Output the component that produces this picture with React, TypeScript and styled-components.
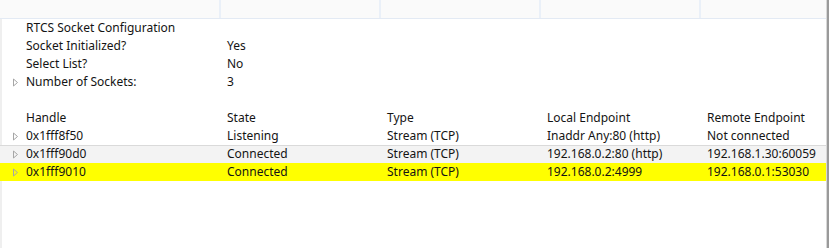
import styled, { createGlobalStyle } from "styled-components";

const GlobalStyle = createGlobalStyle`
  html, body { margin: 0; padding: 0; background: #fff; }
  body {
    font-family: "Noto Sans", "Noto Sans CJK SC", "Liberation Sans", sans-serif;
    font-size: 12px;
    color: #141414;
  }
`;

interface IRow {
  cells: string[];
  expandable?: boolean;
  tone?: "plain" | "alt" | "selected";
}

const rows: IRow[] = [
  { cells: ["RTCS Socket Configuration", "", "", "", ""] },
  { cells: ["Socket Initialized?", "Yes", "", "", ""] },
  { cells: ["Select List?", "No", "", "", ""] },
  { cells: ["Number of Sockets:", "3", "", "", ""], expandable: true },
  { cells: ["", "", "", "", ""] },
  { cells: ["Handle", "State", "Type", "Local Endpoint", "Remote Endpoint"] },
  {
    cells: ["0x1fff8f50", "Listening", "Stream (TCP)", "Inaddr Any:80 (http)", "Not connected"],
    expandable: true,
  },
  {
    cells: ["0x1fff90d0", "Connected", "Stream (TCP)", "192.168.0.2:80 (http)", "192.168.1.30:60059"],
    expandable: true,
    tone: "alt",
  },
  {
    cells: ["0x1fff9010", "Connected", "Stream (TCP)", "192.168.0.2:4999", "192.168.0.1:53030"],
    expandable: true,
    tone: "selected",
  },
];

const COLS = "221px 160px 160px 160px 1fr";

const App = () => {
  return (
    <>
      <GlobalStyle />
      <Frame>
        <Tree>
          <Header>
            {[0, 1, 2, 3, 4].map((i) => (
              <HeaderCell key={i} />
            ))}
          </Header>
          {rows.map((row, i) => (
            <Row key={i} $tone={row.tone ?? "plain"}>
              <FirstCell>
                <Twisty>
                  {row.expandable && (
                    <svg width="7" height="9" viewBox="0 0 7 9">
                      <path d="M1.5 1 L5.5 4.5 L1.5 8 Z" fill="none" stroke="#a6a6a6" strokeWidth="1" />
                    </svg>
                  )}
                </Twisty>
                {row.cells[0]}
              </FirstCell>
              {row.cells.slice(1).map((c, j) => (
                <Cell key={j}>{c}</Cell>
              ))}
            </Row>
          ))}
        </Tree>
      </Frame>
    </>
  );
};
export default App;

const Frame = styled.div`
  width: 832px;
  height: 248px;
  display: flex;
  box-sizing: border-box;
  border-left: 2px solid #efefef;
`;

const Tree = styled.div`
  width: 824px;
  height: 100%;
  border-right: 1px solid #d8d8d8;
  box-shadow: 2px 0 0 #9a9a9a;
  display: flex;
  flex-direction: column;
`;

const Header = styled.div`
  display: grid;
  grid-template-columns: ${COLS};
  height: 18px;
  background: #fafafa;
  border-bottom: 1px solid #e3eaf4;
  margin-left: -2px;
`;

const HeaderCell = styled.div`
  border-right: 2px solid #eaf0f8;
  &:last-child { border-right: none; }
`;

const Row = styled.div<{ $tone: "plain" | "alt" | "selected" }>`
  display: grid;
  grid-template-columns: ${COLS};
  height: 18px;
  line-height: 18px;
  margin-left: -2px;
  background: ${(p) =>
    p.$tone === "selected" ? "#ffff00" : p.$tone === "alt" ? "#f3f3f3" : "transparent"};
  box-shadow: ${(p) => (p.$tone === "alt" ? "inset 0 1px 0 #dadada" : "none")};
  white-space: nowrap;
`;

const FirstCell = styled.div`
  display: flex;
  align-items: center;
  padding-left: 12px;
`;

const Twisty = styled.span`
  width: 14px;
  display: inline-flex;
  align-items: center;
`;

const Cell = styled.div`
  padding-left: 6px;
`;
